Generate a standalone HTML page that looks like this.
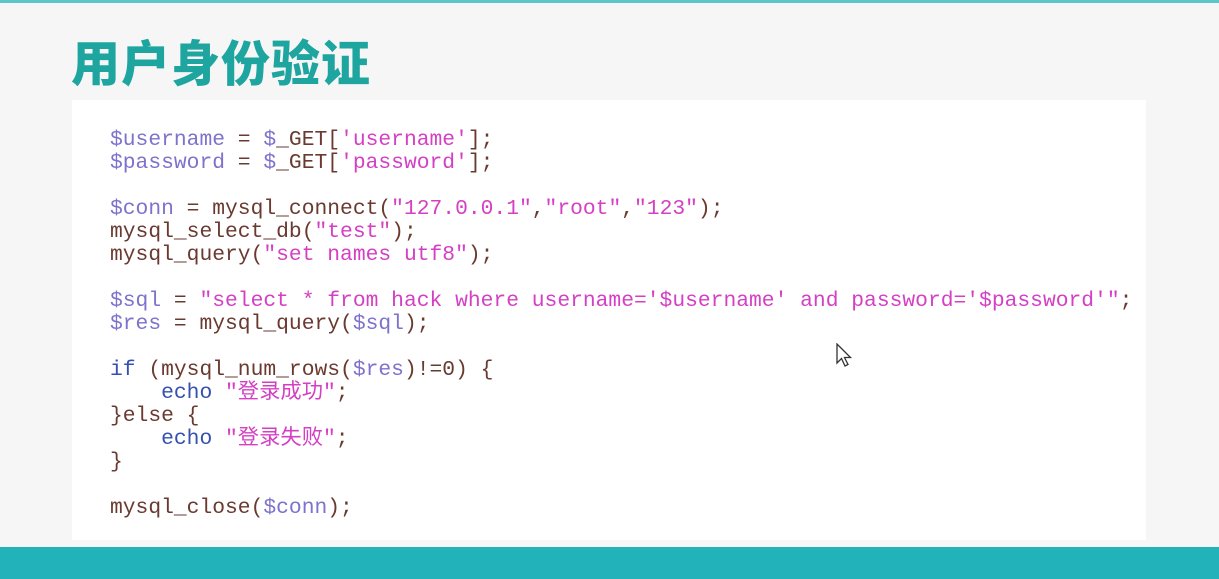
<!DOCTYPE html>
<html><head><meta charset="utf-8"><style>
body{margin:0;width:1219px;height:579px;background:#f6f6f6;position:relative;overflow:hidden;font-family:"Liberation Sans","Noto Sans CJK SC",sans-serif}
.top{position:absolute;left:0;top:0;width:1219px;height:3px;background:#5cc7c8}
h1{position:absolute;left:71px;top:25px;margin:0;font-size:49px;font-weight:900;color:#1fa59f;font-family:"Noto Sans CJK SC",sans-serif;letter-spacing:1px}
.box{position:absolute;left:72px;top:100px;width:1074px;height:440px;background:#fff}
pre{position:absolute;left:110px;top:129px;margin:0;font-family:"Liberation Mono","Noto Sans CJK SC",monospace;font-size:21.3px;line-height:23px;color:#6a3a30}
.v{color:#7d72cc}.s{color:#d43fc4}.k{color:#3550b0}
.bot{position:absolute;left:0;top:547px;width:1219px;height:32px;background:#22b2b9}
</style></head><body>
<div class="top"></div>
<h1>用户身份验证</h1>
<div class="box"></div>
<pre><span class="v">$username</span> = <span class="v">$</span>_GET[<span class="s">'username'</span>];
<span class="v">$password</span> = <span class="v">$</span>_GET[<span class="s">'password'</span>];

<span class="v">$conn</span> = mysql_connect(<span class="s">"127.0.0.1"</span>,<span class="s">"root"</span>,<span class="s">"123"</span>);
mysql_select_db(<span class="s">"test"</span>);
mysql_query(<span class="s">"set names utf8"</span>);

<span class="v">$sql</span> = <span class="s">"select * from hack where username='$username' and password='$password'"</span>;
<span class="v">$res</span> = mysql_query(<span class="v">$sql</span>);

<span class="k">if</span> (mysql_num_rows(<span class="v">$res</span>)!=0) {
    <span class="k">echo</span> <span class="s">"登录成功"</span>;
}else {
    <span class="k">echo</span> <span class="s">"登录失败"</span>;
}

mysql_close(<span class="v">$conn</span>);</pre>
<svg style="position:absolute;left:836px;top:343px" width="18" height="26" viewBox="0 0 18 26"><path d="M1 1 L1 20 L5.5 15.5 L9 23 L12 21.5 L8.5 14.5 L14.5 14.5 Z" fill="#fff" stroke="#333" stroke-width="1.3"/></svg>
<div class="bot"></div>
</body></html>
